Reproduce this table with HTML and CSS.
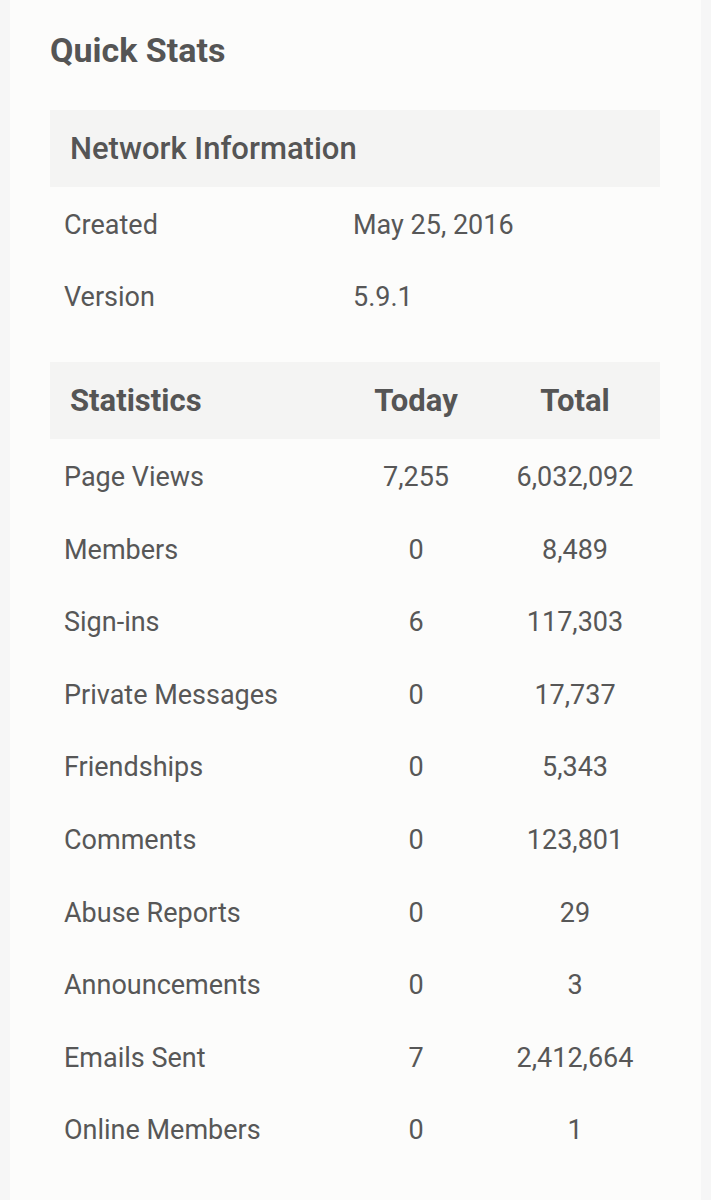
FILE: index.html
```html
<!DOCTYPE html>
<html>
<head>
<meta charset="utf-8">
<link rel="stylesheet" href="styles.css">
</head>
<body>
<div class="card">
  <h2 class="title">Quick Stats</h2>
  <table class="tbl net">
    <colgroup><col class="col-lbl"><col class="col-val"></colgroup>
    <thead>
      <tr><th colspan="2">Network Information</th></tr>
    </thead>
    <tbody>
      <tr><td>Created</td><td>May 25, 2016</td></tr>
      <tr><td>Version</td><td>5.9.1</td></tr>
    </tbody>
  </table>
  <table class="tbl stats">
    <thead>
      <tr><th class="c1">Statistics</th><th class="c2">Today</th><th class="c3">Total</th></tr>
    </thead>
    <tbody>
      <tr><td>Page Views</td><td class="num">7,255</td><td class="num">6,032,092</td></tr>
      <tr><td>Members</td><td class="num">0</td><td class="num">8,489</td></tr>
      <tr><td>Sign-ins</td><td class="num">6</td><td class="num">117,303</td></tr>
      <tr><td>Private Messages</td><td class="num">0</td><td class="num">17,737</td></tr>
      <tr><td>Friendships</td><td class="num">0</td><td class="num">5,343</td></tr>
      <tr><td>Comments</td><td class="num">0</td><td class="num">123,801</td></tr>
      <tr><td>Abuse Reports</td><td class="num">0</td><td class="num">29</td></tr>
      <tr><td>Announcements</td><td class="num">0</td><td class="num">3</td></tr>
      <tr><td>Emails Sent</td><td class="num">7</td><td class="num">2,412,664</td></tr>
      <tr><td>Online Members</td><td class="num">0</td><td class="num">1</td></tr>
    </tbody>
  </table>
</div>
</body>
</html>
```
FILE: styles.css
```css
html, body {
  margin: 0;
  padding: 0;
  background: #f6f6f6;
}
body {
  font-family: Roboto, "Liberation Sans", sans-serif;
  color: #575757;
}
.card {
  margin: 0 10px;
  background: #fcfcfb;
  padding: 27px 40px 40px 40px;
  min-height: 1200px;
  box-sizing: border-box;
}
.title {
  margin: 0 0 37px 0;
  font-size: 34px;
  font-weight: 700;
  line-height: 46px;
  color: #555555;
}
.tbl {
  width: 610px;
  border-collapse: collapse;
  table-layout: fixed;
}
.tbl th {
  background: #f4f4f3;
  font-weight: 700;
  font-size: 31px;
  height: 77px;
  padding: 0 0 0 20px;
  text-align: left;
  color: #555555;
}
.net th {
  font-weight: 500;
  font-size: 31px;
}
.tbl td {
  font-size: 27px;
  line-height: 32px;
  height: 72.6px;
  padding: 3px 0 0 14px;
  box-sizing: border-box;
  color: #575757;
}
.net .col-lbl {
  width: 289px;
}
.stats {
  margin-top: 30px;
}
.stats .c1 { width: 272px; }
.stats .c2 { width: 148px; padding: 0; text-align: center; }
.stats .c3 { width: 170px; padding: 0; text-align: center; }
.stats .num {
  text-align: center;
  padding-left: 0;
}
```
